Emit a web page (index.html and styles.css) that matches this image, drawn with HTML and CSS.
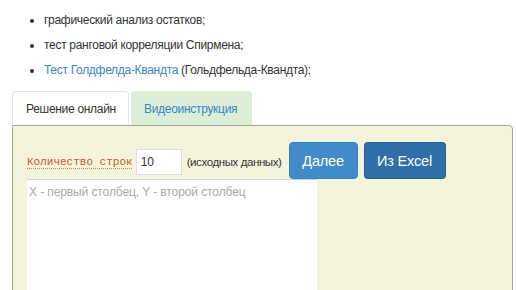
FILE: index.html
```html
<!DOCTYPE html>
<html lang="ru">
<head>
    <meta charset="UTF-8">
    <title>Регрессионный анализ</title>
    <link rel="stylesheet" href="styles.css">
</head>
<body>
    <ul class="methods">
        <li>графический анализ остатков;</li>
        <li>тест ранговой корреляции Спирмена;</li>
        <li><a href="#">Тест Голдфелда-Квандта</a> (Гольдфельда-Квандта);</li>
    </ul>

    <div class="tabs">
        <div class="tab active">Решение онлайн</div>
        <div class="tab video">Видеоинструкция</div>
    </div>

    <div class="panel">
        <div class="row">
            <abbr class="rows-label" title="Число наблюдений">Количество строк</abbr>
            <input class="rows-input" type="text" value="10">
            <span class="hint">(исходных данных)</span>
            <button class="btn">Далее</button>
            <button class="btn focused">Из Excel</button>
        </div>
        <textarea class="data" placeholder="X - первый столбец, Y - второй столбец"></textarea>
    </div>
</body>
</html>
```

FILE: styles.css
```css
/* Global */
body {
    margin: 0;
    font-family: 'Liberation Sans', Arial, sans-serif;
    font-size: 12px;
    letter-spacing: -0.3px;
    color: #333;
    background: #fff;
    overflow: hidden;
    height: 290px;
}

/* List of methods */
.methods {
    margin: 0;
    padding: 8px 0 0 44px;
}

.methods li {
    line-height: 25px;
}

.methods a {
    color: #3a84c4;
    text-decoration: none;
}

/* Tabs */
.tabs {
    display: flex;
    gap: 2px;
    margin: 8px 0 0 12px;
}

.tab {
    height: 34px;
    line-height: 34px;
    padding: 0 13px;
    border: 1px solid #e4e4e4;
    border-bottom: none;
    border-radius: 4px 4px 0 0;
    box-sizing: border-box;
    white-space: nowrap;
}

.tab.active {
    background: #fff;
    color: #333;
    width: 117px;
}

.tab.video {
    background: #dcefd6;
    border-color: #dcefd6;
    color: #3a84c4;
    width: 121px;
    padding-left: 12px;
}

/* Panel */
.panel {
    margin-left: 12px;
    width: 501px;
    height: 200px;
    box-sizing: border-box;
    background: #f4f4dd;
    border: 1px solid #a4a49a;
    border-radius: 0 4px 0 0;
    padding: 16px 0 0 14px;
}

.row {
    display: flex;
    align-items: center;
    height: 37px;
}

.rows-label {
    font-family: 'Liberation Mono', 'Courier New', monospace;
    font-size: 11px;
    letter-spacing: 0;
    color: #c8562e;
    text-decoration: underline dotted #d9893a;
    text-underline-offset: 3px;
    margin-top: 3px;
}

.rows-input {
    width: 46px;
    height: 26px;
    box-sizing: border-box;
    margin: 3px 0 0 3px;
    padding: 0 4px;
    border: 1px solid #ddd;
    font-family: 'Liberation Sans', Arial, sans-serif;
    font-size: 12px;
    color: #333;
    background: #fff;
}

.hint {
    margin: 3px 2px 0 5px;
    font-size: 11.5px;
    letter-spacing: -0.4px;
}

.btn {
    height: 37px;
    width: 69px;
    margin-left: 5px;
    padding: 0;
    border: 1px solid #3680c0;
    border-radius: 4px;
    background: #428bca;
    color: #fff;
    font-family: 'Liberation Sans', Arial, sans-serif;
    font-size: 14.5px;
    letter-spacing: -0.2px;
}

.btn.focused {
    width: 82px;
    margin-left: 6px;
    background: #2f6ea6;
    border: 1px dotted #1e4f7a;
}

.data {
    display: block;
    width: 290px;
    height: 140px;
    box-sizing: border-box;
    margin: 0;
    padding: 5px 2px;
    border: none;
    border-top: 1px solid #c9d3da;
    background: #fff;
    resize: none;
    font-family: 'Liberation Sans', Arial, sans-serif;
    font-size: 12px;
    letter-spacing: -0.1px;
}

.data::placeholder {
    color: #aaa;
}
```
